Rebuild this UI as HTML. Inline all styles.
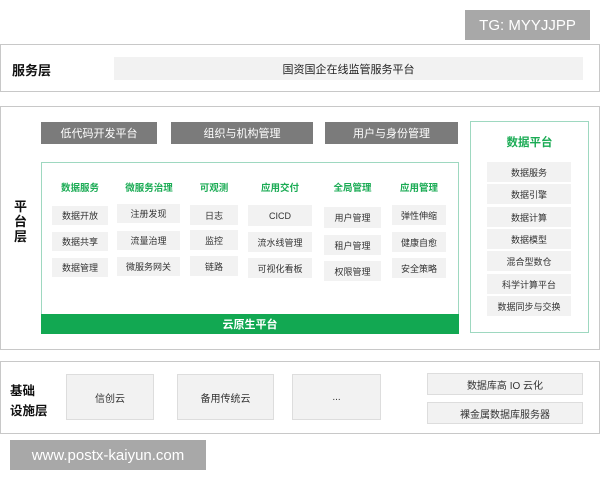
<!DOCTYPE html>
<html><head><meta charset="utf-8"><style>
*{margin:0;padding:0;box-sizing:border-box}
body{width:600px;height:480px;background:#fff;position:relative;overflow:hidden;font-family:"Liberation Sans","Noto Sans CJK SC",sans-serif;color:#333}
div{position:absolute}
.c{display:flex;align-items:center;justify-content:center;text-align:center}
.box{border:1px solid #c8c8c8;background:#fff}
.g{background:#f2f2f2;font-size:9px;color:#333}
.dk{background:#7b7b7b;color:#fff;font-size:11px}
.h{font-size:9.5px;font-weight:bold;color:#1aab54}
.lbl{font-size:13px;font-weight:bold;color:#111}
</style></head><body>
<div class="c" style="left:465px;top:10px;width:125px;height:30px;background:#a8a8a8;color:#fff;font-size:15px">TG: MYYJJPP</div>

<div class="box" style="left:0;top:44px;width:600px;height:48px"></div>
<div class="lbl" style="left:12px;top:60px">服务层</div>
<div class="c" style="left:114px;top:57px;width:469px;height:23px;background:#f2f2f2;font-size:11px;color:#222">国资国企在线监管服务平台</div>

<div class="box" style="left:0;top:106px;width:600px;height:244px"></div>
<div class="lbl" style="left:14px;top:199px;width:14px;line-height:15px">平台层</div>
<div class="c dk" style="left:41px;top:122px;width:116px;height:22px">低代码开发平台</div>
<div class="c dk" style="left:171px;top:122px;width:142px;height:22px">组织与机构管理</div>
<div class="c dk" style="left:325px;top:122px;width:133px;height:22px">用户与身份管理</div>

<div style="left:41px;top:162px;width:418px;height:172px;border:1px solid #9ed8c0"></div>
<div class="c" style="left:41px;top:314px;width:418px;height:20px;background:#12a852;color:#fff;font-size:11px;font-weight:bold">云原生平台</div>

<div class="c h" style="left:51px;top:180px;width:58px;height:14px">数据服务</div>
<div class="c h" style="left:114px;top:180px;width:70px;height:14px">微服务治理</div>
<div class="c h" style="left:190px;top:180px;width:48px;height:14px">可观测</div>
<div class="c h" style="left:248px;top:180px;width:64px;height:14px">应用交付</div>
<div class="c h" style="left:324px;top:180px;width:57px;height:14px">全局管理</div>
<div class="c h" style="left:392px;top:180px;width:54px;height:14px">应用管理</div>

<div class="c g" style="left:52px;top:206px;width:56px;height:19px">数据开放</div>
<div class="c g" style="left:52px;top:232px;width:56px;height:19px">数据共享</div>
<div class="c g" style="left:52px;top:258px;width:56px;height:19px">数据管理</div>
<div class="c g" style="left:117px;top:204px;width:63px;height:19px">注册发现</div>
<div class="c g" style="left:117px;top:231px;width:63px;height:19px">流量治理</div>
<div class="c g" style="left:117px;top:257px;width:63px;height:19px">微服务网关</div>
<div class="c g" style="left:190px;top:205px;width:48px;height:20px">日志</div>
<div class="c g" style="left:190px;top:230px;width:48px;height:20px">监控</div>
<div class="c g" style="left:190px;top:256px;width:48px;height:20px">链路</div>
<div class="c g" style="left:248px;top:205px;width:64px;height:21px">CICD</div>
<div class="c g" style="left:248px;top:232px;width:64px;height:20px">流水线管理</div>
<div class="c g" style="left:248px;top:258px;width:64px;height:20px">可视化看板</div>
<div class="c g" style="left:324px;top:207px;width:57px;height:21px">用户管理</div>
<div class="c g" style="left:324px;top:235px;width:57px;height:20px">租户管理</div>
<div class="c g" style="left:324px;top:261px;width:57px;height:20px">权限管理</div>
<div class="c g" style="left:392px;top:205px;width:54px;height:20px">弹性伸缩</div>
<div class="c g" style="left:392px;top:232px;width:54px;height:20px">健康自愈</div>
<div class="c g" style="left:392px;top:258px;width:54px;height:20px">安全策略</div>

<div style="left:470px;top:121px;width:119px;height:212px;border:1px solid #9ed8c0"></div>
<div class="c" style="left:470px;top:134px;width:119px;height:16px;color:#1aab54;font-size:11.5px;font-weight:bold">数据平台</div>
<div class="c g" style="left:487px;top:162px;width:84px;height:20px">数据服务</div>
<div class="c g" style="left:487px;top:184px;width:84px;height:20px">数据引擎</div>
<div class="c g" style="left:487px;top:207px;width:84px;height:20px">数据计算</div>
<div class="c g" style="left:487px;top:229px;width:84px;height:20px">数据模型</div>
<div class="c g" style="left:487px;top:251px;width:84px;height:20px">混合型数仓</div>
<div class="c g" style="left:487px;top:274px;width:84px;height:20px">科学计算平台</div>
<div class="c g" style="left:487px;top:296px;width:84px;height:20px">数据同步与交换</div>

<div class="box" style="left:0;top:361px;width:600px;height:73px"></div>
<div class="lbl" style="left:10px;top:381px;line-height:20px;font-size:12.5px">基础<br>设施层</div>
<div class="c g" style="left:66px;top:374px;width:88px;height:46px;border:1px solid #ddd;font-size:10px">信创云</div>
<div class="c g" style="left:177px;top:374px;width:97px;height:46px;border:1px solid #ddd;font-size:10px">备用传统云</div>
<div class="c g" style="left:292px;top:374px;width:89px;height:46px;border:1px solid #ddd;font-size:10px">...</div>
<div class="c g" style="left:427px;top:373px;width:156px;height:22px;border:1px solid #ddd;font-size:10px">数据库高 IO 云化</div>
<div class="c g" style="left:427px;top:402px;width:156px;height:22px;border:1px solid #ddd;font-size:10px">裸金属数据库服务器</div>

<div class="c" style="left:10px;top:440px;width:196px;height:30px;background:#a8a8a8;color:#fff;font-size:15px">www.postx-kaiyun.com</div>
</body></html>
